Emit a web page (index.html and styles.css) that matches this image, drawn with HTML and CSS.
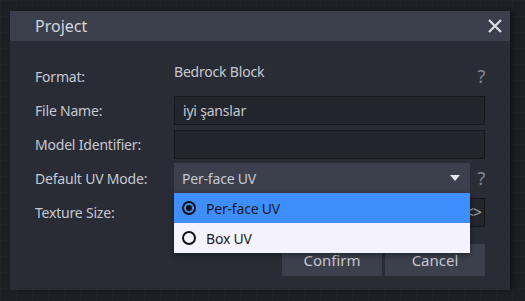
FILE: index.html
```html
<!DOCTYPE html>
<html lang="en">
<head>
    <meta charset="UTF-8">
    <title>Project</title>
    <link rel="stylesheet" href="styles.css">
</head>
<body>
    <div class="dialog">
        <div class="dialog-title">
            <span>Project</span>
            <svg class="close" width="14" height="14" viewBox="0 0 14 14">
                <path d="M1 1 L13 13 M13 1 L1 13" stroke="#dcdde3" stroke-width="2.2" />
            </svg>
        </div>
        <div class="dialog-body">
            <div class="form-row">
                <label>Format:</label>
                <div class="info">Bedrock Block</div>
                <span class="help">?</span>
            </div>
            <div class="form-row">
                <label>File Name:</label>
                <div class="input wide">iyi şanslar</div>
            </div>
            <div class="form-row">
                <label>Model Identifier:</label>
                <div class="input wide"></div>
            </div>
            <div class="form-row">
                <label>Default UV Mode:</label>
                <div class="select">
                    <span>Per-face UV</span>
                    <svg class="arrow" width="10" height="6" viewBox="0 0 10 6">
                        <path d="M0 0 L10 0 L5 6 Z" fill="#e4e5ea" />
                    </svg>
                    <ul class="options">
                        <li class="selected"><span class="radio on"></span>Per-face UV</li>
                        <li><span class="radio"></span>Box UV</li>
                    </ul>
                </div>
                <span class="help">?</span>
            </div>
            <div class="form-row">
                <label>Texture Size:</label>
                <div class="input wide numeric"><span class="nudge">&lt;&gt;</span></div>
            </div>
            <div class="buttons">
                <button>Confirm</button>
                <button>Cancel</button>
            </div>
        </div>
    </div>
</body>
</html>
```

FILE: styles.css
```css
body {
    margin: 0;
    padding: 11px 15px 0 10px;
    height: 301px;
    box-sizing: border-box;
    background-color: #1c1f24;
    background-image:
        linear-gradient(to right, rgba(255,255,255,0.02) 1px, transparent 1px),
        linear-gradient(to bottom, rgba(255,255,255,0.02) 1px, transparent 1px);
    background-size: 16px 16px;
    font-family: "Noto Sans", sans-serif;
    font-size: 14px;
    letter-spacing: -0.2px;
    color: #c6c8d1;
    overflow: hidden;
}
.dialog {
    width: 500px;
    height: 279px;
    background-color: #292c35;
    box-shadow: 4px 0 4px rgba(0,0,0,0.35);
}
.dialog-title {
    height: 30px;
    background-color: #3b3e4b;
    display: flex;
    align-items: center;
    justify-content: space-between;
    padding: 0 8px 0 25px;
    font-size: 16px;
    letter-spacing: 0;
    color: #d4d6de;
}
.dialog-body {
    padding: 20px 25px 0 25px;
}
.form-row {
    display: flex;
    align-items: center;
    height: 30px;
    margin-bottom: 4px;
}
.form-row label {
    width: 139px;
    flex-shrink: 0;
}
.info {
    flex: 1;
    align-self: flex-start;
    padding-top: 1px;
}
.help {
    width: 15px;
    text-align: right;
    color: #83868f;
    font-size: 18px;
}
.input {
    height: 29px;
    box-sizing: border-box;
    background-color: #22252b;
    border: 1px solid #16181c;
    padding: 0 8px;
    display: flex;
    align-items: center;
}
.wide {
    flex: 1;
}
.numeric {
    justify-content: flex-end;
    padding-right: 3px;
}
.nudge {
    color: #9a9da8;
    font-size: 16px;
    letter-spacing: -1px;
}
.select {
    position: relative;
    flex: 1;
    height: 30px;
    background-color: #3c3f4c;
    display: flex;
    align-items: center;
    justify-content: space-between;
    padding: 0 10px 0 8px;
}
.options {
    position: absolute;
    top: 30px;
    left: 0;
    right: 0;
    margin: 0;
    padding: 0;
    list-style: none;
    z-index: 2;
    box-shadow: 0 2px 6px rgba(0,0,0,0.4);
}
.options li {
    height: 30px;
    display: flex;
    align-items: center;
    padding-left: 8px;
    background-color: #f4f3fd;
    color: #1a1c22;
}
.options li.selected {
    background-color: #3e8ffd;
}
.radio {
    box-sizing: border-box;
    width: 14px;
    height: 14px;
    border: 2px solid #111;
    border-radius: 50%;
    margin-right: 10px;
    display: flex;
    align-items: center;
    justify-content: center;
}
.radio.on::after {
    content: "";
    width: 6px;
    height: 6px;
    border-radius: 50%;
    background-color: #111;
}
.buttons {
    display: flex;
    justify-content: flex-end;
    gap: 3px;
    margin-top: 17px;
}
.buttons button {
    width: 100px;
    height: 32px;
    border: none;
    background-color: #3c3f4c;
    color: #c6c8d1;
    font-family: "Noto Sans", sans-serif;
    font-size: 15px;
}
```
